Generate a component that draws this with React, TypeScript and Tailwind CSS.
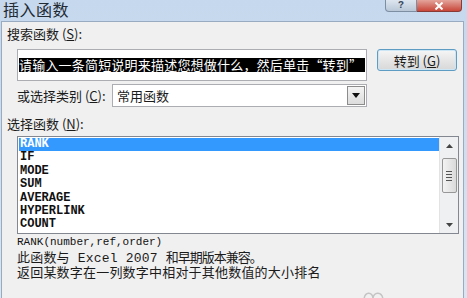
import React from "react";

const cjk = { fontFamily: '"Noto Sans CJK SC", "Noto Sans", sans-serif' };
const mono = { fontFamily: '"Liberation Mono", "DejaVu Sans Mono", monospace' };

export default function App() {
  const items = ["RANK", "IF", "MODE", "SUM", "AVERAGE", "HYPERLINK", "COUNT"];
  return (
    <div
      className="relative w-[467px] h-[298px] overflow-hidden flex flex-col bg-[linear-gradient(#c5d8ed,#d9e5f2)] text-[#1b1b1b]"
      style={cjk}
    >
      {/* title bar */}
      <div className="h-[21px] flex items-start shrink-0">
        <span className="pl-[3px] text-[16px] leading-[19px] text-[#222a33] tracking-[0.5px]">插入函数</span>
        <div className="flex-1" />
        <div className="w-[32px] h-[12px] rounded-bl-[4px] border border-t-0 border-[#7d8ea3] bg-[linear-gradient(#dde6f0,#b9c7d7)] flex items-center justify-center">
          <span className="text-[10px] leading-[10px] font-bold text-[#39485a]" style={mono}>?</span>
        </div>
        <div className="w-[45px] h-[12px] rounded-br-[4px] border border-t-0 border-l-0 border-[#8a3a36] bg-[linear-gradient(#e3a49b,#c9463a)] flex items-center justify-center">
          <svg width="10" height="8" viewBox="0 0 10 8">
            <path d="M1.5 0.5 L8.5 7.5 M8.5 0.5 L1.5 7.5" stroke="#ffffff" strokeWidth="2" />
          </svg>
        </div>
        <div className="w-[5px]" />
      </div>

      {/* body */}
      <div className="flex-1 ml-[1px] mr-[3px] border border-b-0 border-[#98abc0] bg-[#f0f0f0] flex flex-col pl-[5px]">
        <div className="mt-[5px] h-[13px] text-[13px] leading-[13px]">
          搜索函数 (<span className="underline">S</span>):
        </div>
        <div className="mt-[9px] flex items-start">
          <div className="ml-[10px] w-[350px] h-[32px] border border-[#abadb3] bg-white pl-[1px] pt-[1px]">
            <span className="inline-block h-[14px] bg-black text-white text-[13px] leading-[14px] tracking-[0.2px] whitespace-nowrap pr-[3px]">
              请输入一条简短说明来描述您想做什么，然后单击“转到”
            </span>
          </div>
          <div className="ml-[10px] w-[80px] h-[22px] rounded-[3px] border border-[#5e9cc4] bg-[linear-gradient(#f6f6f6,#e6e6e6_50%,#d8d8d8)] shadow-[inset_0_0_0_1px_#cde6f5] flex items-center justify-center text-[13px] leading-[13px]">
            转到 (<span className="underline">G</span>)
          </div>
        </div>
        <div className="mt-[3px] flex items-center h-[23px]">
          <div className="ml-[10px] w-[95px] text-[13px] leading-[13px] whitespace-nowrap">
            或选择类别 (<span className="underline">C</span>):
          </div>
          <div className="w-[255px] h-[23px] border border-[#abadb3] bg-white flex items-center">
            <span className="pl-[4px] flex-1 text-[13px] leading-[13px]">常用函数</span>
            <div className="w-[18px] h-[19px] mr-[1px] border border-[#8c8c8c] bg-[linear-gradient(#f4f4f4,#dcdcdc)] flex items-center justify-center">
              <svg width="8" height="5" viewBox="0 0 8 5">
                <path d="M0 0 H8 L4 5 Z" fill="#111" />
              </svg>
            </div>
          </div>
        </div>
        <div className="mt-[10px] h-[13px] text-[13px] leading-[13px]">
          选择函数 (<span className="underline">N</span>):
        </div>
        <div className="mt-[6px] ml-[10px] w-[442px] h-[98px] border border-[#828790] bg-white flex">
          <div className="flex-1 pt-[1px] pl-[1px]">
            {items.map((it, i) => (
              <div
                key={it}
                className={
                  "h-[13.4px] text-[12px] leading-[13.4px] font-bold pl-[1px] " +
                  (i === 0 ? "bg-[#3399ff] text-white" : "text-[#111]")
                }
                style={mono}
              >
                {it}
              </div>
            ))}
          </div>
          <div className="w-[19px] flex flex-col items-center bg-[#eef0f2] border-l border-[#e3e3e3]">
            <div className="h-[17px] flex items-center justify-center">
              <svg width="7" height="4" viewBox="0 0 7 4">
                <path d="M0 4 L3.5 0 L7 4 Z" fill="#444" />
              </svg>
            </div>
            <div className="mt-[4px] w-[15px] h-[35px] rounded-[2px] border border-[#979797] bg-[linear-gradient(90deg,#f3f3f3,#dadada)] flex flex-col items-center justify-center gap-[2px]">
              <div className="w-[6px] h-[1px] bg-[#555]" />
              <div className="w-[6px] h-[1px] bg-[#555]" />
              <div className="w-[6px] h-[1px] bg-[#555]" />
              <div className="w-[6px] h-[1px] bg-[#555]" />
            </div>
            <div className="flex-1" />
            <div className="h-[17px] flex items-center justify-center">
              <svg width="7" height="4" viewBox="0 0 7 4">
                <path d="M0 0 H7 L3.5 4 Z" fill="#444" />
              </svg>
            </div>
          </div>
        </div>
        <div className="mt-[2px] ml-[10px] h-[13px] text-[11px] leading-[13px] text-[#111] whitespace-nowrap" style={mono}>
          RANK(number,ref,order)
        </div>
        <div className="mt-[1px] ml-[10px] text-[13px] leading-[13px] tracking-[0.2px] whitespace-nowrap">
          <div>
            此函数与<span className="text-[13px]" style={mono}> Excel 2007 </span>
            <span className="tracking-[-1px]">和早期版本兼容。</span>
          </div>
          <div>返回某数字在一列数字中相对于其他数值的大小排名</div>
        </div>
      </div>

      {/* watermark */}
      <svg className="absolute left-[362px] top-[289px]" width="24" height="12" viewBox="0 0 24 12">
        <path d="M2 12 C2 2 11 2 11 10 C11 2 21 2 21 12" stroke="#c4c4c4" strokeWidth="1.5" fill="none" />
      </svg>
    </div>
  );
}
